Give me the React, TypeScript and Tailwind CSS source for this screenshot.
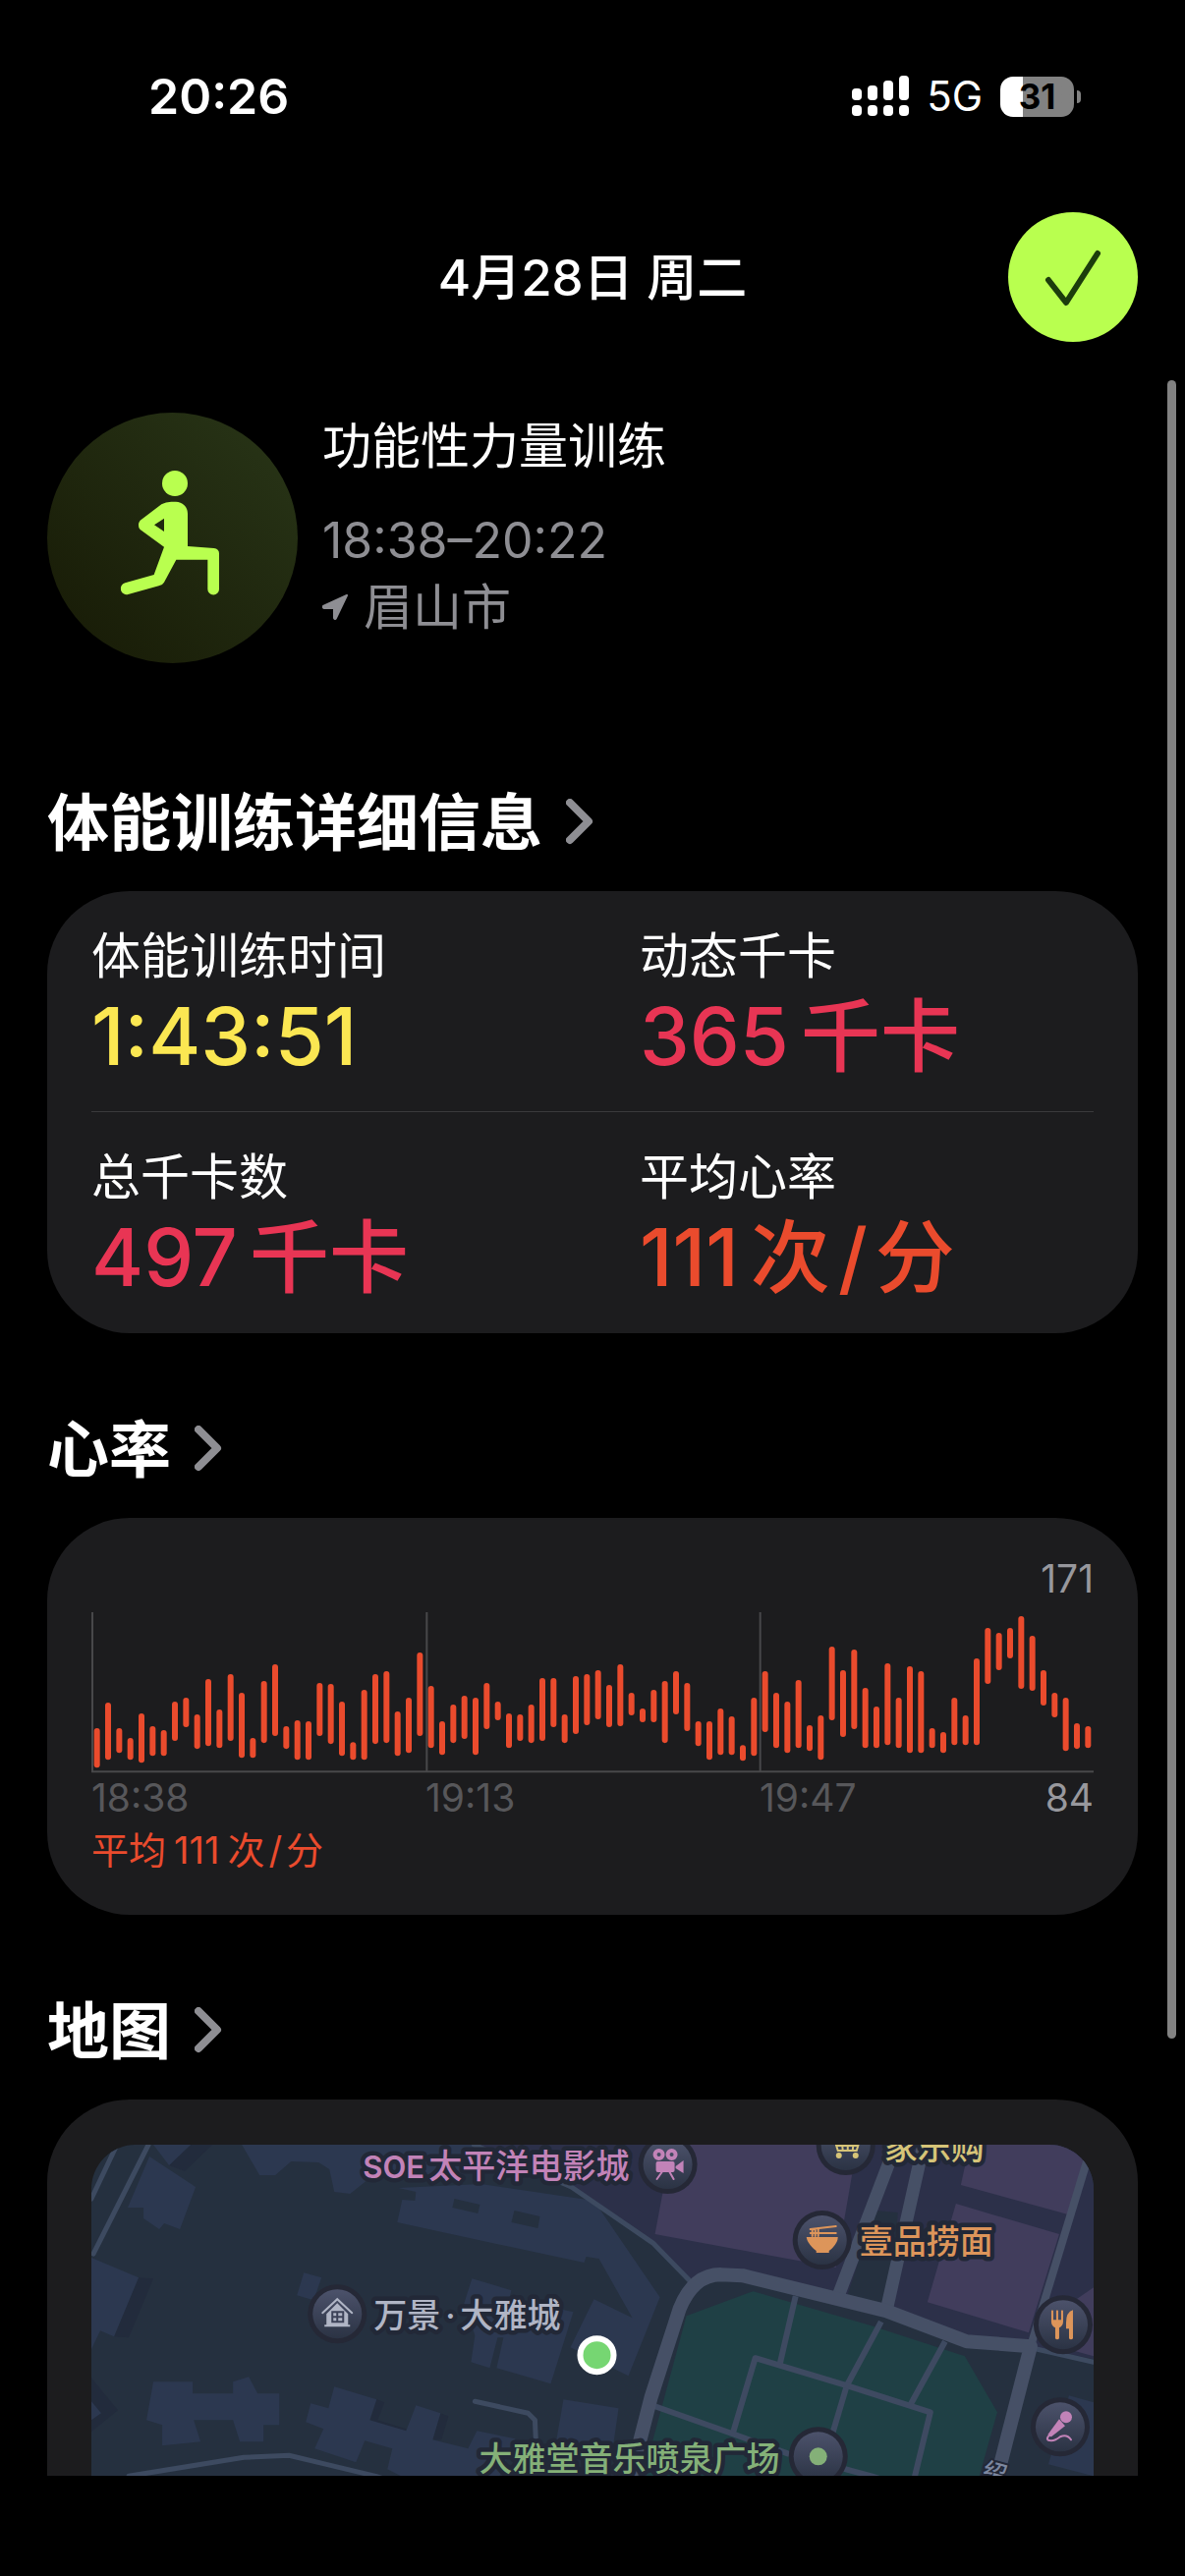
import React from 'react';

type Stat = { label: string; value: string; unit?: string[]; color: string };

const statRows: Stat[][] = [
  [
    { label: '体能训练时间', value: '1:43:51', color: 'text-[#fbe752]' },
    { label: '动态千卡', value: '365', unit: ['千卡'], color: 'text-[#e83554]' },
  ],
  [
    { label: '总千卡数', value: '497', unit: ['千卡'], color: 'text-[#e83554]' },
    { label: '平均心率', value: '111', unit: ['次', '/', '分'], color: 'text-[#ea4b2d]' },
  ],
];

// [top, bottom] of every heart rate sample, in chart units
const samples: [number, number][] = [
  [118, 158], [92, 150], [118, 143], [128, 150], [103, 153], [116, 146], [120, 146], [91, 131], [87, 117], [104, 139],
  [68, 136], [99, 138], [63, 131], [82, 148], [128, 148], [70, 133], [53, 126], [116, 139], [110, 150], [111, 150],
  [72, 126], [73, 134], [91, 146], [132, 150], [79, 150], [63, 134], [60, 133], [101, 146], [87, 143], [41, 126],
  [75, 138], [111, 145], [94, 133], [85, 129], [87, 145], [72, 119], [91, 110], [103, 138], [104, 131], [94, 133],
  [67, 131], [67, 117], [104, 133], [65, 124], [63, 115], [59, 109], [74, 117], [53, 116], [82, 105], [98, 112],
  [79, 112], [70, 133], [60, 104], [72, 121], [111, 136], [111, 150], [98, 145], [106, 145], [135, 151], [87, 146],
  [60, 122], [82, 138], [91, 143], [69, 138], [115, 141], [105, 150], [35, 110], [59, 127], [38, 119], [77, 138],
  [96, 138], [52, 135], [87, 138], [55, 143], [60, 143], [118, 138], [122, 143], [87, 135], [105, 135], [47, 135],
  [16, 73], [21, 59], [16, 47], [4, 78], [24, 80], [59, 95], [82, 107], [87, 141], [113, 139], [116, 138],
];

const timeTicks = ['18:38', '19:13', '19:47'];

function StatusBar() {
  return (
    <div className="flex h-[196px] shrink-0 items-center justify-between pr-[106px] pl-[151px]">
      <span className="text-[50px] leading-none font-semibold">20:26</span>
      <div className="flex items-center gap-[18px]">
        <svg width="58" height="42" viewBox="1 0 58 42" fill="#fff" aria-label="信号">
          <rect x="1" y="13" width="10" height="12" rx="4" />
          <rect x="17" y="10" width="10" height="15" rx="4" />
          <rect x="33" y="5" width="10" height="20" rx="4" />
          <rect x="49" y="0" width="10" height="25" rx="4" />
          {[1, 17, 33, 49].map((x) => (
            <rect key={x} x={x} y="30" width="10" height="11" rx="4" />
          ))}
        </svg>
        <span className="text-[42px] leading-none">5G</span>
        <div className="flex items-center gap-[3px]">
          <div className="flex h-[41px] w-[75px] items-center justify-center rounded-[13px] bg-linear-to-r from-white from-31% to-[#828282] to-31%">
            <span className="text-[35px] leading-none font-bold text-black">31</span>
          </div>
          <div className="h-[13px] w-1 rounded-r-full bg-[#828282]" />
        </div>
      </div>
    </div>
  );
}

function Header() {
  return (
    <header className="grid h-[172px] shrink-0 grid-cols-[132px_1fr_132px] items-center px-12">
      <h1 className="col-start-2 text-center text-[51px] leading-none font-medium">4月28日 周二</h1>
      <button type="button" aria-label="完成" className="flex h-[132px] w-[132px] items-center justify-center rounded-full bg-[#b9ff4f]">
        <svg width="60" height="60" viewBox="0 0 60 60" fill="none" stroke="#1c3d0c" strokeWidth="6" strokeLinecap="round" strokeLinejoin="round">
          <path d="M5 33 L23 56 L55 6" />
        </svg>
      </button>
    </header>
  );
}

function Activity() {
  return (
    <div className="flex gap-[25px]">
      <div className="flex h-[255px] w-[255px] shrink-0 items-center justify-center rounded-full bg-linear-to-tr from-[#171a06] to-[#293618]">
        <svg width="130" height="160" viewBox="0 22 390 480" fill="#b9ff4f">
          <circle cx="201" cy="94" r="39" />
          <path
            fillRule="evenodd"
            d="M190 150h14a36 36 0 0 1 36 36V286L320 292Q336 294 336 308V417a17 17 0 0 1-35 0V327H205L168 396Q163 405 152 407L58 433a18 18 0 0 1-9-35L137 373L168 288L95 235Q84 221 95 207L160 158Q173 150 190 150ZM168 201L138 221L168 241Z"
          />
        </svg>
      </div>
      <div className="flex flex-col">
        <h2 className="text-[50px] leading-[68px]">功能性力量训练</h2>
        <p className="mt-7 text-[50px] leading-[68px] text-[#8e8e93]">18:38–20:22</p>
        <p className="flex items-center gap-4 text-[50px] leading-[68px] text-[#8e8e93]">
          <svg width="26" height="26" viewBox="0 0 26 26" fill="#8e8e93" stroke="#8e8e93" strokeWidth="2" strokeLinejoin="round">
            <path d="M25 1L1 12Q0 13 2 14L12 14L12 24Q13 26 14 24Z" />
          </svg>
          眉山市
        </p>
      </div>
    </div>
  );
}

function Section({ title, children }: { title: string; children: React.ReactNode }) {
  return (
    <section>
      <button type="button" className="mb-8 flex items-center gap-6 text-[63px] leading-[76px] font-bold">
        {title}
        <svg width="28" height="48" viewBox="0 0 28 48" fill="none" stroke="#8e8e93" strokeWidth="8" strokeLinecap="round" strokeLinejoin="round">
          <path d="M4 4L23 23L4 42" />
        </svg>
      </button>
      <div className="rounded-[84px] bg-[#1c1c1e] px-[45px]">{children}</div>
    </section>
  );
}

function Details() {
  return (
    <div className="divide-y divide-[#3a3a3c]">
      {statRows.map((row) => (
        <div key={row[0].label} className="grid h-[225px] grid-cols-2 gap-x-24 pt-9">
          {row.map((stat) => (
            <div key={stat.label} className="whitespace-nowrap">
              <p className="text-[50px] leading-[60px]">{stat.label}</p>
              <p className={`flex items-baseline gap-3 text-[81px] leading-[104px] font-medium ${stat.color}`}>
                {stat.value}
                {stat.unit && (
                  <span className="flex gap-2">
                    {stat.unit.map((part) => (
                      <span key={part}>{part}</span>
                    ))}
                  </span>
                )}
              </p>
            </div>
          ))}
        </div>
      ))}
    </div>
  );
}

function HeartRate() {
  const step = 1019 / samples.length;
  return (
    <div className="pt-9 pb-[38px] text-[39px]">
      <p className="text-right leading-[52px] text-[#98989d]">171</p>
      <svg viewBox="0 0 1019 164" className="mt-2 block w-full" role="img" aria-label="心率图表">
        <g stroke="#48484a" strokeWidth="2">
          <path d="M1 0V162M341 0V162M680 0V162M0 162H1019" />
        </g>
        <g fill="#ea4b2d">
          {samples.map(([top, bottom], i) => (
            <rect key={i} x={(i + 0.5) * step - 3} y={top} width="6" height={bottom - top} rx="3" />
          ))}
        </g>
      </svg>
      <div className="grid grid-cols-3 leading-[50px] text-[#57575a]">
        {timeTicks.map((tick, i) => (
          <div key={tick} className="flex justify-between">
            <span>{tick}</span>
            {i === timeTicks.length - 1 && <span className="text-[#98989d]">84</span>}
          </div>
        ))}
      </div>
      <p className="flex gap-2 text-[38px] leading-[56px] text-[#ea4b2d]">
        <span>平均</span>
        <span>111</span>
        <span className="flex gap-1">
          <span>次</span>
          <span>/</span>
          <span>分</span>
        </span>
      </p>
    </div>
  );
}

function Pin({ x, y, children }: { x: number; y: number; children: React.ReactNode }) {
  return (
    <g transform={`translate(${x} ${y})`}>
      <circle r="30" fill="#252836" />
      <circle r="25" fill="url(#pin)" />
      {children}
    </g>
  );
}

function PlaceMap() {
  return (
    <svg viewBox="0 0 1019 400" className="block w-full rounded-[45px] bg-[#25303f]" role="img" aria-label="地图">
      <defs>
        <linearGradient id="pin" x1="0" y1="0" x2="0" y2="1">
          <stop offset="0" stopColor="#4c526b" />
          <stop offset="1" stopColor="#2b3344" />
        </linearGradient>
      </defs>

      {/* Districts */}
      <path fill="#2c3049" d="M389 0L488 43L571 100L608 137L662 133L808 169L890 200L955 205L1019 218V0Z" />
      <path fill="#25303f" d="M797 67L820 69L812 165L800 167L768 155Z" />
      <g fill="#413d5c">
        <path d="M590 0H775L774 27L757 125L573 91Z" />
        <path d="M893 0H1005L1013 15L993 71L884 41Z" />
        <path d="M879 60L984 91L953 191L850 160Z" />
        <path d="M1019 145L990 165V207L1019 215Z" />
      </g>
      <path fill="#1f4045" d="M673 149L793 184L888 215L921 272L885 400H552L571 300L605 174Z" />

      {/* Building shadows */}
      <g fill="#222b3c">
        <path d="M101 0H123L95 27L79 21Z" />
        <path d="M48 135L63 136L38 196L23 195Z" />
        <path d="M0 237L27 270L0 292Z" />
        <path d="M290 259L298 262L291 280L320 289L320 295L283 282Z" />
        <path d="M355 273L363 276L356 300L347 300Z" />
      </g>

      {/* Buildings */}
      <g fill="#2c3850">
        <path d="M63 0H101L79 21Z" />
        <path d="M59 12L106 43L90 86L74 80L69 86L53 75V64H37Z" />
        <path d="M153 0L171 31H187L203 17L231 18L242 25L247 48L263 50L283 34L300 30H440L389 0Z" />
        <path d="M312 44L330 48L329 57L316 56L311 79L501 120L503 114L516 116L550 176L511 157L487 206L546 235L578 155L511 57L396 40Z" />
        <path d="M0 115L48 135L23 195L9 189L0 208Z" />
        <path d="M216 130L234 135L226 158L209 153Z" />
        <path d="M387 136L427 148L425 156L490 170L467 243L412 227L419 196H413L405 227L386 221L390 194L379 161Z" />
        <path d="M63 241H103V253H144V241L160 236L169 253H191V285H175V302H151L144 280H104L111 302L72 306V285L56 280Z" />
        <path d="M247 246L290 259L283 280L320 291L330 265L355 273L347 300L383 309L392 291L431 299L415 337L400 380L301 330L306 309L278 301L269 323L227 309L236 289L218 282L223 263L241 268Z" />
        <path d="M0 261L10 273L0 280Z" />
        <path d="M480 259L536 268L530 310L472 305Z" />
        <path d="M994 255L1019 262V337L973 325Z" />
      </g>
      <g fill="#25303f">
        <path d="M369 55L395 61L393 70L367 64Z" />
        <path d="M430 67L456 73L454 85L427 79Z" />
      </g>

      {/* Roads */}
      <g fill="none" stroke="#3d4a60" strokeWidth="5" strokeLinecap="round" strokeLinejoin="round">
        <path d="M26 0L0 55M58 0L2 111" />
        <path d="M389 0L488 43L571 100L612 142" />
        <path d="M38 337L155 318L201 316L239 325L289 337L420 380" />
        <path d="M390 261L444 273L451 280L452 303" />
        <path d="M962 208L1019 221" />
      </g>
      <g fill="none" stroke="#3e4a61" strokeWidth="6" strokeLinejoin="round">
        <path d="M716 154L700 223M803 180L768 245L754 292M868 200L833 264" />
        <path d="M652 294L675 217L768 245L853 272L822 400" />
        <path d="M573 266L652 294L708 314L793 337L850 355" />
      </g>
      <g fill="none" stroke="#465066" strokeLinejoin="round">
        <path strokeWidth="13" d="M818 0L760 152M846 0L808 170" />
        <path strokeWidth="8" d="M1016 4L955 205" />
        <path strokeWidth="14" d="M535 390L569 257L598 167Q612 132 640 132L662 133L808 169L890 200L955 205L905 400" />
      </g>

      {/* Pins */}
      <Pin x={586} y={20}>
        <g fill="none" stroke="#c283b8" strokeWidth="4">
          <circle cx="-9" cy="-10" r="4" />
          <circle cx="4" cy="-10" r="4" />
        </g>
        <path fill="#c283b8" d="M-10-3H5Q7-3 7-1V6Q7 8 5 8H-10Q-12 8-12 6V-1Q-12-3-10-3ZM8 2L16-4V9L8 4Z" />
        <path stroke="#c283b8" strokeWidth="2" strokeLinecap="round" d="M-6 8L-11 15M2 8L6 15" />
      </Pin>
      <Pin x={767} y={1}>
        <g fill="none" stroke="#d6c478" strokeWidth="2">
          <path d="M-16-8H-12L-8 5H11L14-5H-11M-9 0H12M-4-5L-3 5M2-5V5M8-5L7 5" />
        </g>
        <circle cx="-7" cy="10" r="3" fill="#d6c478" />
        <circle cx="10" cy="10" r="3" fill="#d6c478" />
      </Pin>
      <Pin x={743} y={97}>
        <path fill="#dd955a" d="M-16-3H16Q16 4 7 11V13H-6V11Q-15 4-16-3Z" />
        <path stroke="#dd955a" strokeWidth="2" strokeLinecap="round" d="M-12-11L14-14M-12-7H14M-10-11V-4M-7-11V-4M-4-12V-4" />
      </Pin>
      <Pin x={250} y={172}>
        <path fill="none" stroke="#b0b5c5" strokeWidth="2" strokeLinecap="round" d="M-15-1L0-15L15-1" />
        <path fill="#b0b5c5" d="M0-11L11 0V11H13V13H-13V11H-11V0Z" />
        <path stroke="#3c4258" strokeWidth="2" d="M-5-2H6V8H-5ZM0-2V8M-5 3H6" fill="none" />
      </Pin>
      <Pin x={988} y={183}>
        <path fill="#dd955a" d="M-12-14Q-11-16-10-14V-5H-7V-14Q-6-16-5-14V-5H-2V-14Q-1-16 0-14V-3Q0 1-4 3V14Q-6 16-8 14V3Q-12 1-12-3ZM10-15V14Q8 16 6 14V4H3V-2Q3-13 10-15Z" />
      </Pin>
      <Pin x={985} y={287}>
        <circle cx="6" cy="-10" r="6" fill="#c283b8" />
        <path fill="#c283b8" d="M-1-8L5-1L-9 10Q-12 10-12 7Z" />
        <path fill="none" stroke="#c283b8" strokeWidth="2" strokeLinecap="round" d="M-11 8Q-16 14-9 14Q-5 14 0 10Q7 7 11 13" />
      </Pin>
      <Pin x={739} y={317}>
        <circle r="9" fill="#84b078" />
      </Pin>

      {/* Labels */}
      <g fontSize="34" fontWeight="500" stroke="#222837" strokeWidth="9" strokeLinejoin="round" style={{ paintOrder: 'stroke' }}>
        <text x="276" y="34" fill="#c283b8">
          <tspan fontSize="31" fontWeight="600">SOE</tspan>
          <tspan x="343">太平洋电影城</tspan>
        </text>
        <text x="806" y="15" fill="#d6c478">家乐购</text>
        <text x="781" y="111" fill="#dd955a">壹品捞面</text>
        <text x="287" y="186" fill="#b0b5c5">
          万景
          <tspan x="360">·</tspan>
          <tspan x="375">大雅城</tspan>
        </text>
        <text x="394" y="332" fill="#84b078">大雅堂音乐喷泉广场</text>
        <text x="907" y="342" fontSize="24" strokeWidth="4" fill="#7c87a0" transform="rotate(16 919 332)">绍</text>
      </g>

      <circle cx="514" cy="214" r="17" fill="#76d672" stroke="#fff" strokeWidth="6" />
    </svg>
  );
}

export default function App() {
  return (
    <div lang="zh-CN" className="relative flex h-screen flex-col bg-black font-[Inter,'Noto_Sans_CJK_SC',sans-serif] text-white">
      <StatusBar />
      <Header />
      <main className="flex-1 overflow-y-auto px-12 pt-[52px] [scrollbar-width:none]">
        <Activity />
        <div className="mt-31 flex flex-col gap-20 pb-20">
          <Section title="体能训练详细信息">
            <Details />
          </Section>
          <Section title="心率">
            <HeartRate />
          </Section>
          <Section title="地图">
            <div className="py-[46px]">
              <PlaceMap />
            </div>
          </Section>
        </div>
      </main>
      <div className="h-[102px] shrink-0" />

      {/* Scroll indicator */}
      <div className="absolute top-[387px] right-[9px] h-[1688px] w-[9px] rounded-full bg-[#828282]" />
    </div>
  );
}
